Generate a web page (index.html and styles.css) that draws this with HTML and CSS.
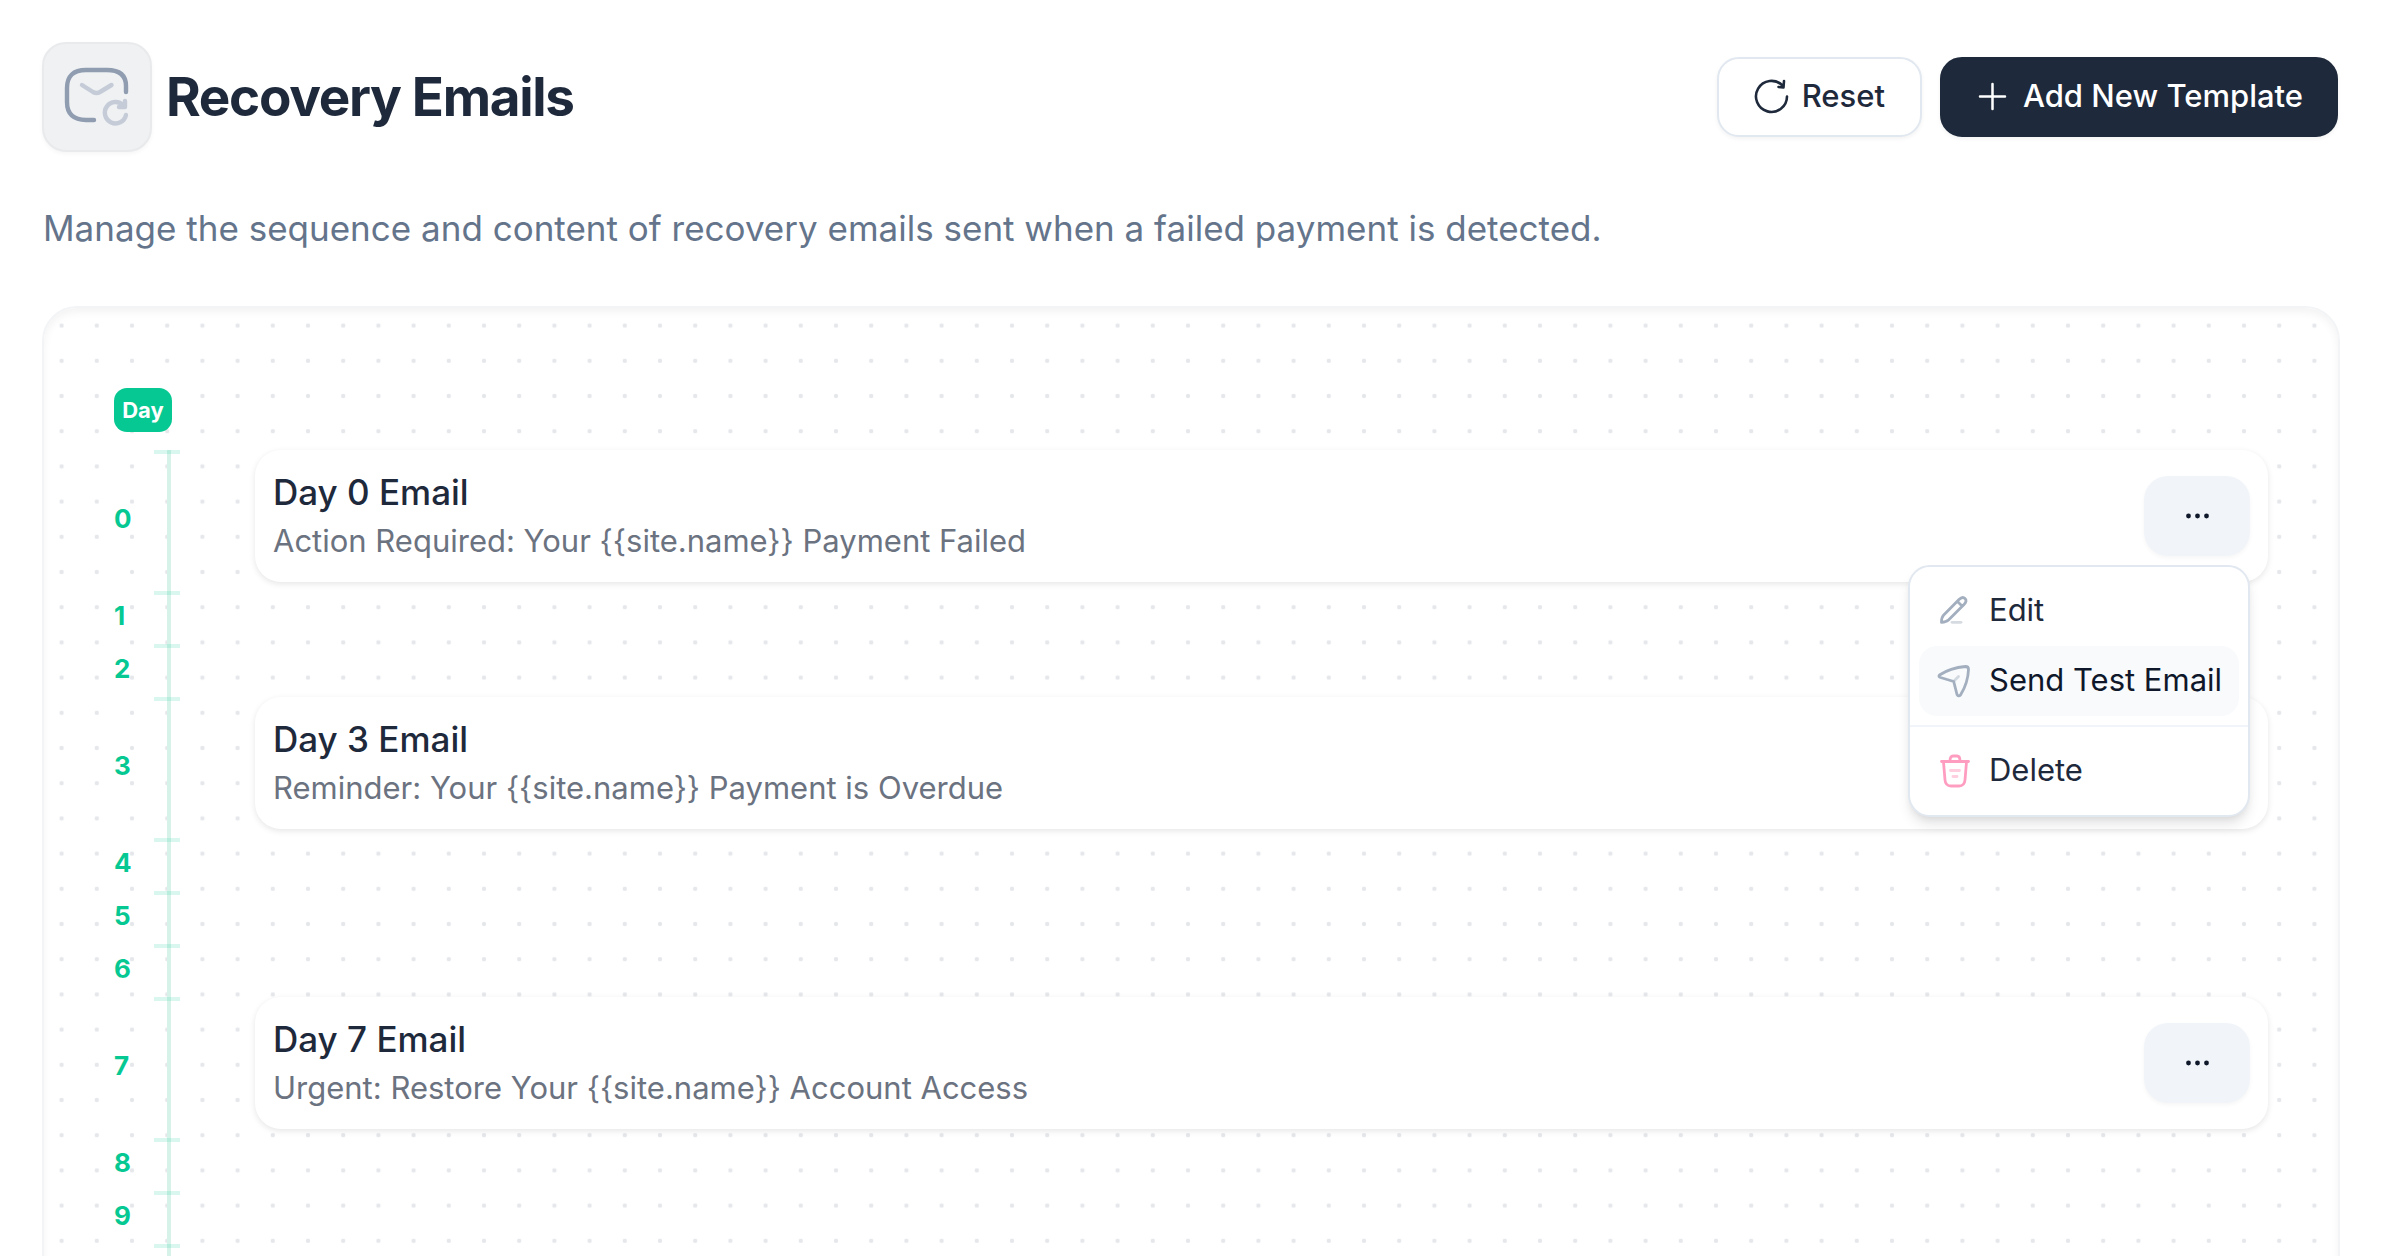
FILE: index.html
```
<!DOCTYPE html>
<html lang="en">
<head>
  <meta charset="UTF-8">
  <meta name="viewport" content="width=device-width, initial-scale=1.0">
  <title>Recovery Emails</title>
  <link rel="stylesheet" href="styles.css">
</head>
<body>
  <header class="page-header">
    <div class="page-icon">
      <svg width="66" height="66" viewBox="0 0 66 66" fill="none" stroke-width="4.4" stroke-linecap="round" stroke-linejoin="round">
        <path d="M30 56H22Q3 56 3 38V24Q3 6 22 6H43Q62 6 62 22V28" stroke="#909db1"/>
        <path d="M18 21l11 7q3.500 2 7 0l11.500-7M62 51A10.700 10.700 0 1 1 59.500 41.500M61 37v6h-6" stroke="#c5ccd8"/>
      </svg>
    </div>
    <h1>Recovery Emails</h1>
    <div class="actions">
      <button type="button" class="btn btn-outline">
        <svg width="35" height="35" viewBox="0 0 35 35" fill="none" stroke="#1e293b" stroke-width="2.600" stroke-linecap="round" stroke-linejoin="round">
          <path d="M33 17.500A15.500 15.500 0 1 1 28.500 6.500L29.500 8M30 2l-.5 6.500-5-.5"/>
        </svg>
        Reset
      </button>
      <button type="button" class="btn btn-dark">
        <svg width="35" height="35" viewBox="0 0 35 35" fill="none" stroke="#fff" stroke-width="2.500" stroke-linecap="round">
          <path d="M17.500 5v25M5 17.500h25"/>
        </svg>
        Add New Template
      </button>
    </div>
  </header>

  <p class="intro">Manage the sequence and content of recovery emails sent when a failed payment is detected.</p>

  <main class="board">
    <span class="day-badge">Day</span>
    <ol class="timeline">
      <li class="day has-email">
        <span class="day-number">0</span>
        <article class="email">
          <div class="email-text">
            <h2>Day 0 Email</h2>
            <p>Action Required: Your {{site.name}} Payment Failed</p>
          </div>
          <div class="more">
            <button type="button" class="btn-more" aria-label="Options" aria-expanded="true">
              <svg width="35" height="35" viewBox="0 0 35 35" fill="#0f172a"><circle cx="8.500" cy="17" r="2.400"/><circle cx="17.500" cy="17" r="2.400"/><circle cx="26.500" cy="17" r="2.400"/></svg>
            </button>
            <div class="menu" role="menu">
              <button type="button" class="menu-item" role="menuitem">
                <svg width="35" height="35" viewBox="0 0 35 35" fill="none" stroke="#a3afbf" stroke-width="2.800" stroke-linecap="round" stroke-linejoin="round">
                  <path d="M5.500 29.300q0-5 2-7L23 6.500q3.500-3.500 6-1t-1 6L12.500 27q-2 2-7 2.300zM21.500 8.500l4.500 4.500"/>
                  <path d="M16 29.300h9" opacity=".45"/>
                </svg>
                Edit
              </button>
              <button type="button" class="menu-item active" role="menuitem">
                <svg width="35" height="35" viewBox="0 0 35 35" fill="none" stroke="#a3afbf" stroke-width="2.800" stroke-linecap="round" stroke-linejoin="round">
                  <path d="M18 18l4.500-4.500" opacity=".45"/>
                  <path d="M3.500 12Q14 5 29.500 3.500q3 0 3 3Q32 20 24.500 32q-2 2-3.500-.5L17.700 18.500 4.500 14.500q-2.500-1-1-2.500z"/>
                </svg>
                Send Test Email
              </button>
              <hr>
              <button type="button" class="menu-item" role="menuitem">
                <svg width="35" height="35" viewBox="0 0 35 35" fill="none" stroke="#ff9dc0" stroke-width="2.800" stroke-linecap="round" stroke-linejoin="round">
                  <path d="M5.500 8.500h27M7.500 9l1.500 18q.5 6 6 6h8q5.500 0 6-6l1.500-18M14 8q0-5 3-5h4q3 0 3 5"/>
                  <path d="M14.500 17.500h9M17 23.500h4" opacity=".5"/>
                </svg>
                Delete
              </button>
            </div>
          </div>
        </article>
      </li>
      <li class="day"><span class="day-number">1</span></li>
      <li class="day"><span class="day-number">2</span></li>
      <li class="day has-email">
        <span class="day-number">3</span>
        <article class="email">
          <div class="email-text">
            <h2>Day 3 Email</h2>
            <p>Reminder: Your {{site.name}} Payment is Overdue</p>
          </div>
        </article>
      </li>
      <li class="day"><span class="day-number">4</span></li>
      <li class="day"><span class="day-number">5</span></li>
      <li class="day"><span class="day-number">6</span></li>
      <li class="day has-email">
        <span class="day-number">7</span>
        <article class="email">
          <div class="email-text">
            <h2>Day 7 Email</h2>
            <p>Urgent: Restore Your {{site.name}} Account Access</p>
          </div>
          <div class="more">
            <button type="button" class="btn-more" aria-label="Options">
              <svg width="35" height="35" viewBox="0 0 35 35" fill="#0f172a"><circle cx="8.500" cy="17" r="2.400"/><circle cx="17.500" cy="17" r="2.400"/><circle cx="26.500" cy="17" r="2.400"/></svg>
            </button>
          </div>
        </article>
      </li>
      <li class="day"><span class="day-number">8</span></li>
      <li class="day"><span class="day-number">9</span></li>
      <li class="day"></li>
    </ol>
  </main>
</body>
</html>
```
FILE: styles.css
```
* { box-sizing: border-box; }
body { margin: 0; padding: 42px 60px 0 42px; font-family: Inter, sans-serif; font-size: 31px; line-height: 44px; color: #1e293b; background: #fff; }
h1, h2, p, ol { margin: 0; padding: 0; }
button { font: inherit; color: inherit; cursor: pointer; }
svg { flex: none; }

/* header */
.page-header { display: flex; align-items: center; gap: 14px; padding-right: 2px; }
.page-icon { display: flex; align-items: center; justify-content: center; width: 110px; height: 110px; border: 2px solid #e8eaec; border-radius: 24px; background: #eff1f3; box-shadow: 0 2px 4px rgba(0, 0, 0, .04); }
h1 { font-size: 53px; line-height: 70px; font-weight: 700; letter-spacing: -0.025em; }
.actions { display: flex; gap: 18px; margin-left: auto; }
.btn { display: flex; align-items: center; gap: 13px; height: 80px; padding: 0 35px 2px; border: 2px solid #e2e8f0; border-radius: 22px; font-weight: 500; background: #fff; box-shadow: 0 2px 4px rgba(0, 0, 0, .05); }
.btn-dark { padding: 0 33px 2px; border-color: #1e293b; background: #1e293b; color: #fff; }

.intro { margin-top: 50px; padding-left: 1px; font-size: 35px; line-height: 53px; color: #64748b; }

/* dotted board */
.board {
  min-height: 1000px;
  margin-top: 51px;
  padding: 80px 70px;
  border: 2px solid #f3f4f6;
  border-radius: 35px;
  background: url("data:image/svg+xml,%3Csvg xmlns='http://www.w3.org/2000/svg' viewBox='0 0 80 80'%3E%3Cpattern id='d' width='16' height='16' patternUnits='userSpaceOnUse'%3E%3Ccircle cx='8' cy='8' r='1' fill='%23e5e7eb'/%3E%3C/pattern%3E%3Crect width='80' height='80' fill='url(%23d)'/%3E%3C/svg%3E") 0 0 / 176px 176px;
  box-shadow: inset 0 4px 9px rgba(0, 0, 0, .05);
}
.day-badge { display: block; width: 58px; margin-bottom: 18px; border-radius: 13px; background: #06c892; color: #fff; font-size: 22px; font-weight: 700; text-align: center; }

/* timeline */
.timeline { list-style: none; }
.day { display: grid; grid-template-columns: 40px 26px 1fr; height: 53px; background: linear-gradient(#d7f3e9, #d7f3e9) 53px 0 / 4px 100% no-repeat; }
.day::before { content: ""; grid-column: 2; grid-row: 1; height: 4px; background: rgba(6, 200, 146, .15); }
.day-number { grid-column: 1; grid-row: 1; align-self: center; padding-bottom: 3px; color: #06c892; font-size: 26px; font-weight: 700; }
.has-email { height: 141px; }
.email { display: flex; grid-column: 3; grid-row: 1; align-items: center; height: 132px; margin-left: 75px; padding: 0 18px; border-radius: 26px; background: #fff; box-shadow: 0 2px 6px rgba(0, 0, 0, .1); }
.email-text { flex: 1; padding-bottom: 3px; }
.email h2 { font-size: 35px; line-height: 53px; font-weight: 500; }
.email p { color: #6b7280; }

.more { position: relative; }
.btn-more { display: flex; align-items: center; justify-content: center; width: 106px; height: 80px; padding: 0; border: 0; border-radius: 24px; background: #f1f5f9; box-shadow: 0 2px 4px rgba(0, 0, 0, .04); }

/* dropdown */
.menu { position: absolute; z-index: 1; top: 89px; right: 0; width: 342px; padding: 9px; border: 2px solid #e2e8f0; border-radius: 22px; background: #fff; box-shadow: 0 9px 13px -2px rgba(0, 0, 0, .1), 0 4px 9px -4px rgba(0, 0, 0, .1); }
.menu-item { display: flex; align-items: center; gap: 18px; width: 100%; height: 70px; padding: 0 17px 2px; border: 0; border-radius: 18px; background: none; white-space: nowrap; }
.menu-item.active { background: #f8fafc; color: #0f172a; }
.menu hr { height: 2px; margin: 9px -9px; border: 0; background: #f1f5f9; }
```
